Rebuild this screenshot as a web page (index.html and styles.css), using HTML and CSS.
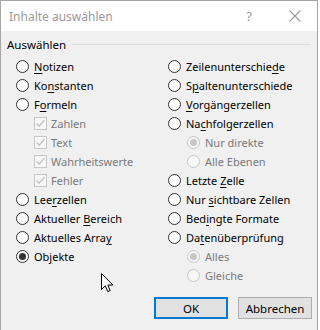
FILE: index.html
```html
<!DOCTYPE html>
<html lang="de">
<head>
  <meta charset="UTF-8" />
  <title>Inhalte auswählen</title>
  <link rel="stylesheet" href="styles.css">
</head>
<body>
  <div class="dialog">
    <div class="titlebar">
      <span class="title">Inhalte auswählen</span>
      <span class="help">?</span>
      <svg class="close" width="12" height="12" viewBox="0 0 12 12">
        <path d="M0.5 0.5 L11.5 11.5 M11.5 0.5 L0.5 11.5" stroke="#9a9a9a" stroke-width="1.1" fill="none"/>
      </svg>
    </div>

    <div class="content">
      <div class="legend">
        <span>Auswählen</span>
        <span class="legend-line"></span>
      </div>

      <div class="columns">
        <div class="col">
          <div class="row"><span class="radio"></span><span><u>N</u>otizen</span></div>
          <div class="row"><span class="radio"></span><span>Ko<u>n</u>stanten</span></div>
          <div class="row"><span class="radio"></span><span>F<u>o</u>rmeln</span></div>
          <div class="row sub disabled"><span class="check"><svg width="11" height="11" viewBox="0 0 11 11"><path d="M1.5 5.5 L4.2 8.2 L9.5 2.2" stroke="#bcbcbc" stroke-width="1.2" fill="none"/></svg></span><span>Zahlen</span></div>
          <div class="row sub disabled"><span class="check"><svg width="11" height="11" viewBox="0 0 11 11"><path d="M1.5 5.5 L4.2 8.2 L9.5 2.2" stroke="#bcbcbc" stroke-width="1.2" fill="none"/></svg></span><span>Text</span></div>
          <div class="row sub disabled"><span class="check"><svg width="11" height="11" viewBox="0 0 11 11"><path d="M1.5 5.5 L4.2 8.2 L9.5 2.2" stroke="#bcbcbc" stroke-width="1.2" fill="none"/></svg></span><span>Wahrheitswerte</span></div>
          <div class="row sub disabled"><span class="check"><svg width="11" height="11" viewBox="0 0 11 11"><path d="M1.5 5.5 L4.2 8.2 L9.5 2.2" stroke="#bcbcbc" stroke-width="1.2" fill="none"/></svg></span><span>Fehler</span></div>
          <div class="row"><span class="radio"></span><span>Lee<u>r</u>zellen</span></div>
          <div class="row"><span class="radio"></span><span>Aktueller <u>B</u>ereich</span></div>
          <div class="row"><span class="radio"></span><span>Aktuelles Arra<u>y</u></span></div>
          <div class="row"><span class="radio checked"></span><span>Ob<u>j</u>ekte</span></div>
        </div>

        <div class="col">
          <div class="row"><span class="radio"></span><span>Zeilenunterschie<u>d</u>e</span></div>
          <div class="row"><span class="radio"></span><span>S<u>p</u>altenunterschiede</span></div>
          <div class="row"><span class="radio"></span><span><u>V</u>orgängerzellen</span></div>
          <div class="row"><span class="radio"></span><span>Na<u>c</u>hfolgerzellen</span></div>
          <div class="row sub disabled"><span class="radio checked"></span><span>Nur direkte</span></div>
          <div class="row sub disabled"><span class="radio"></span><span>Alle Ebenen</span></div>
          <div class="row"><span class="radio"></span><span>Letzte <u>Z</u>elle</span></div>
          <div class="row"><span class="radio"></span><span>Nur <u>s</u>ichtbare Zellen</span></div>
          <div class="row"><span class="radio"></span><span>Bed<u>i</u>ngte Formate</span></div>
          <div class="row"><span class="radio"></span><span>Da<u>t</u>enüberprüfung</span></div>
          <div class="row sub disabled"><span class="radio checked"></span><span>Alles</span></div>
          <div class="row sub disabled"><span class="radio"></span><span>Gleiche</span></div>
        </div>
      </div>

      <div class="buttons">
        <button class="btn default">OK</button>
        <button class="btn">Abbrechen</button>
      </div>
    </div>

    <svg class="cursor" width="13" height="20" viewBox="0 0 13 20">
      <path d="M0.5 0.5 L0.5 16.5 L4.3 12.8 L6.8 18.6 L9.2 17.6 L6.8 12 L11.8 12 Z" fill="#fff" stroke="#000" stroke-width="1"/>
    </svg>
  </div>
</body>
</html>
```

FILE: styles.css
```css
body {
  margin: 0;
  padding: 0;
  width: 320px;
  height: 330px;
  overflow: hidden;
  background: #fff;
  font-family: 'Noto Sans', sans-serif;
  font-size: 11px;
  color: #000;
}

.dialog {
  position: relative;
  width: 318px;
  height: 330px;
  box-sizing: border-box;
  border: 1px solid #a6a6a6;
  border-bottom: none;
  background: #f0f0f0;
}

.titlebar {
  height: 30px;
  background: #fff;
  display: flex;
  align-items: center;
  padding-left: 8px;
}

.title {
  color: #999;
  font-size: 12px;
  flex-grow: 1;
}

.help {
  color: #999;
  font-size: 13px;
  margin-right: 37px;
}

.close {
  margin-right: 16px;
}

.content {
  padding: 5px 5px 0 6px;
}

.legend {
  display: flex;
  align-items: center;
  height: 17px;
  font-size: 11.5px;
}

.legend-line {
  flex-grow: 1;
  height: 1px;
  background: #dcdcdc;
  margin-left: 6px;
  margin-right: 1px;
}

.columns {
  display: grid;
  grid-template-columns: 152px 1fr;
  margin-top: 4px;
  padding-left: 9px;
}

.row {
  height: 19px;
  display: flex;
  align-items: center;
  white-space: nowrap;
}

.row u {
  text-underline-offset: 2px;
}

.row.sub {
  padding-left: 18px;
}

.col:last-child .row.sub {
  padding-left: 19px;
}

.disabled {
  color: #7a7a7a;
}

.radio {
  width: 13px;
  height: 13px;
  box-sizing: border-box;
  border: 1px solid #333;
  border-radius: 50%;
  background: #fff;
  margin-right: 5px;
  display: flex;
  align-items: center;
  justify-content: center;
  flex-shrink: 0;
}

.radio.checked::after {
  content: '';
  width: 7px;
  height: 7px;
  border-radius: 50%;
  background: #333;
}

.disabled .radio {
  border-color: #c6c6c6;
  background: #f7f7f7;
}

.disabled .radio.checked::after {
  background: #c6c6c6;
}

.check {
  width: 13px;
  height: 13px;
  box-sizing: border-box;
  border: 1px solid #c6c6c6;
  background: #f7f7f7;
  margin-right: 4px;
  display: flex;
  align-items: center;
  justify-content: center;
  flex-shrink: 0;
}

.buttons {
  display: flex;
  justify-content: flex-end;
  gap: 10px;
  margin-top: 12px;
}

.btn {
  width: 74px;
  height: 22px;
  box-sizing: border-box;
  background: #e1e1e1;
  border: 1px solid #adadad;
  font-family: 'Noto Sans', sans-serif;
  font-size: 11.5px;
  color: #000;
  padding: 0;
}

.btn.default {
  border: 2px solid #0078d7;
}

.cursor {
  position: absolute;
  left: 100px;
  top: 272px;
}
```
